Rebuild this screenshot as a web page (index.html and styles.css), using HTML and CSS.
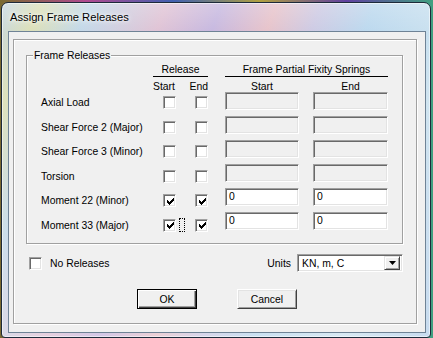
FILE: index.html
```html
<!doctype html>
<html lang="en">
<head>
<meta charset="utf-8">
<title>Assign Frame Releases</title>
<link rel="stylesheet" href="styles.css">
</head>
<body>
<div id="window">
  <div id="titleBar">Assign Frame Releases</div>
  <div id="client">
    <div id="panel">
      <fieldset id="releases">
        <legend>Frame Releases</legend>
        <div class="tables">
          <div class="releaseGrid">
            <span></span>
            <span class="head">Release</span>
            <span></span>
            <span class="sub">Start</span>
            <span class="sub end">End</span>

            <span class="label">Axial Load</span>
            <span class="startCell"><span class="cb"></span></span>
            <span class="endCell"><span class="cb"></span></span>

            <span class="label">Shear Force 2 (Major)</span>
            <span class="startCell"><span class="cb"></span></span>
            <span class="endCell"><span class="cb"></span></span>

            <span class="label">Shear Force 3 (Minor)</span>
            <span class="startCell"><span class="cb"></span></span>
            <span class="endCell"><span class="cb"></span></span>

            <span class="label">Torsion</span>
            <span class="startCell"><span class="cb"></span></span>
            <span class="endCell"><span class="cb"></span></span>

            <span class="label">Moment 22 (Minor)</span>
            <span class="startCell"><span class="cb"><svg width="7" height="7" viewBox="0 0 7 7"><path d="M0 2h1v1h1v1h1v-1h1v-1h1v-1h1v-1h1v3h-1v1h-1v1h-1v1h-1v1h-1v-1h-1v-1h-1z"/></svg></span></span>
            <span class="endCell"><span class="cb"><svg width="7" height="7" viewBox="0 0 7 7"><path d="M0 2h1v1h1v1h1v-1h1v-1h1v-1h1v-1h1v3h-1v1h-1v1h-1v1h-1v1h-1v-1h-1v-1h-1z"/></svg></span></span>

            <span class="label">Moment 33 (Major)</span>
            <span class="startCell"><span class="cb"><svg width="7" height="7" viewBox="0 0 7 7"><path d="M0 2h1v1h1v1h1v-1h1v-1h1v-1h1v-1h1v3h-1v1h-1v1h-1v1h-1v1h-1v-1h-1v-1h-1z"/></svg></span><span class="focus"></span></span>
            <span class="endCell"><span class="cb"><svg width="7" height="7" viewBox="0 0 7 7"><path d="M0 2h1v1h1v1h1v-1h1v-1h1v-1h1v-1h1v3h-1v1h-1v1h-1v1h-1v1h-1v-1h-1v-1h-1z"/></svg></span></span>
          </div>

          <div class="springGrid">
            <span class="head">Frame Partial Fixity Springs</span>
            <span class="sub fs">Start</span>
            <span class="sub fe">End</span>

            <span class="field fs"></span><span class="field fe"></span>
            <span class="field fs"></span><span class="field fe"></span>
            <span class="field fs"></span><span class="field fe"></span>
            <span class="field fs"></span><span class="field fe"></span>
            <span class="field fs on">0</span><span class="field fe on">0</span>
            <span class="field fs on">0</span><span class="field fe on">0</span>
          </div>
        </div>
      </fieldset>

      <div class="options">
        <span class="cb"></span>
        <span class="noRel">No Releases</span>
        <span class="spacer"></span>
        <span class="unitsLabel">Units</span>
        <div class="combo">
          <span class="comboText">KN, m, C</span>
          <span class="drop"><svg width="7" height="4" viewBox="0 0 7 4"><path d="M0 0h7l-3.5 4z"/></svg></span>
        </div>
      </div>

      <div class="buttons">
        <div class="btn default">OK</div>
        <div class="btn">Cancel</div>
      </div>
    </div>
  </div>
</div>
</body>
</html>
```

FILE: styles.css
```css
html, body {
  margin: 0;
  padding: 0;
}

body {
  width: 433px;
  height: 338px;
  overflow: hidden;
  background: linear-gradient(90deg, #7a6a30, #b04a90 20%, #4060b0 40%, #b0a040 60%, #6040a0 80%, #40a080);
  font-family: "Liberation Sans", Arial, sans-serif;
  font-size: 10.4px;
  color: #000;
}

* {
  box-sizing: border-box;
}

#window {
  margin: 2px 2px 0 1px;
  height: 336px;
  border: 1px solid #1d2a3a;
  border-radius: 7px 7px 4px 4px;
  display: flex;
  flex-direction: column;
  background:
    linear-gradient(to bottom, rgba(255, 255, 255, 0.3), rgba(255, 255, 255, 0.1) 30px, rgba(255, 255, 255, 0.3)),
    linear-gradient(110deg, #c0d2de 0%, #d8dcb0 7%, #bcd4e6 16%, #dcbcd0 30%, #c0b0dc 40%, #e4bcc4 50%, #c8c4e0 58%, #b4d4ec 68%, #c8e0ee 84%, #b0cce8 100%);
  box-shadow: inset 0 0 0 1px rgba(255, 255, 255, 0.55);
}

#titleBar {
  height: 28px;
  flex: none;
  display: flex;
  align-items: center;
  padding-left: 8px;
  font-size: 11.2px;
  text-shadow: 0 0 6px #fff, 0 0 3px #fff;
}

#client {
  flex: 1;
  margin: 0 4px 4px 6px;
  border: 1px solid #6f8396;
  background: #f0f0f0;
  display: flex;
  flex-direction: column;
}

#panel {
  flex: 1;
  margin: 7px 8px 8px 4px;
  border: 1px solid #a0a0a0;
  box-shadow: inset 1px 1px 0 #fff, 1px 1px 0 #fff;
}

#releases {
  margin: 9px 13px 0 12px;
  padding: 1px 0 6px 0;
  border: 1px solid #a0a0a0;
  box-shadow: inset 1px 1px 0 #fff, 1px 1px 0 #fff;
  min-width: 0;
}

#releases legend {
  margin-left: 6px;
  padding: 0 1px;
  line-height: 13px;
  background: #f0f0f0;
}

.tables {
  display: flex;
  gap: 17px;
  margin-left: 14px;
}

.releaseGrid {
  display: grid;
  grid-template-columns: 112px 33px 22px;
  grid-template-rows: 14px 13px 25px 24px 25px 24px 25px 24px;
}

.springGrid {
  display: grid;
  grid-template-columns: 74px 14px 75px;
  grid-template-rows: 14px 15px repeat(6, 24px);
}

.head {
  grid-column: 2 / 4;
  text-align: center;
  line-height: 12px;
  padding-top: 1px;
  border-bottom: 1px solid #000;
  white-space: nowrap;
}

.springGrid .head {
  grid-column: 1 / 4;
}

.sub {
  margin-top: 3px;
  line-height: 13px;
  align-self: start;
}

.sub.end {
  text-align: right;
}

.springGrid .sub {
  text-align: center;
}

.fs {
  grid-column: 1;
}

.fe {
  grid-column: 3;
}

.label {
  align-self: center;
  white-space: nowrap;
}

.startCell {
  display: flex;
  align-items: center;
  padding-left: 10px;
}

.endCell {
  display: flex;
  align-items: center;
  justify-content: flex-end;
}

.cb {
  width: 13px;
  height: 13px;
  flex: none;
  display: flex;
  align-items: center;
  justify-content: center;
  background: #fff;
  border: 1px solid;
  border-color: #a0a0a0 #fff #fff #a0a0a0;
  box-shadow: inset 1px 1px 0 #696969, inset -1px -1px 0 #e3e3e3;
}

.cb svg {
  fill: #000;
  margin: 1px 0 0 1px;
}

.focus {
  width: 6px;
  height: 14px;
  margin-left: 3px;
  border: 1px dotted #000;
}

.field {
  align-self: start;
  height: 18px;
  padding-left: 3px;
  line-height: 16px;
  background: #f0f0f0;
  border: 1px solid;
  border-color: #a0a0a0 #fff #fff #a0a0a0;
  box-shadow: inset 1px 1px 0 #696969, inset -1px -1px 0 #e3e3e3;
}

.field.on {
  background: #fff;
}

.options {
  display: flex;
  align-items: center;
  height: 18px;
  margin: 10px 13px 0 15px;
}

.noRel {
  margin-left: 8px;
}

.spacer {
  flex: 1;
}

.unitsLabel {
  margin-right: 6px;
}

.combo {
  width: 106px;
  height: 18px;
  display: flex;
  align-items: center;
  padding-right: 2px;
  background: #fff;
  border: 1px solid;
  border-color: #a0a0a0 #fff #fff #a0a0a0;
  box-shadow: inset 1px 1px 0 #696969, inset -1px -1px 0 #e3e3e3;
}

.comboText {
  flex: 1;
  padding-left: 4px;
}

.drop {
  width: 16px;
  height: 14px;
  display: flex;
  align-items: center;
  justify-content: center;
  background: #f0f0f0;
  border: 1px solid;
  border-color: #e3e3e3 #404040 #404040 #e3e3e3;
  box-shadow: inset 1px 1px 0 #fff, inset -1px -1px 0 #a0a0a0;
}

.drop svg {
  fill: #000;
}

.buttons {
  display: flex;
  gap: 40px;
  margin-top: 17px;
  padding-left: 123px;
}

.btn {
  width: 60px;
  height: 20px;
  display: flex;
  align-items: center;
  justify-content: center;
  background: #f0f0f0;
  border: 1px solid;
  border-color: #fff #404040 #404040 #fff;
  box-shadow: inset 1px 1px 0 #e3e3e3, inset -1px -1px 0 #a0a0a0;
}

.btn.default {
  border-color: #000;
  box-shadow: inset 1px 1px 0 #fff, inset -1px -1px 0 #404040, inset -2px -2px 0 #a0a0a0;
}
```
